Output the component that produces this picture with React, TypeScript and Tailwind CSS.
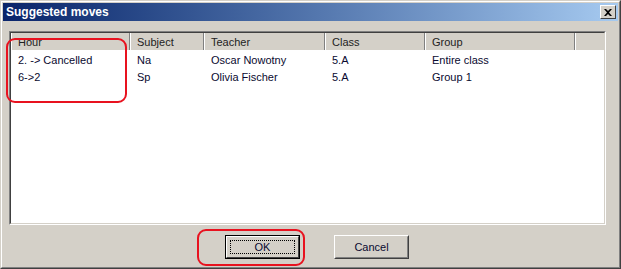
import React from "react";

const cols = [
  { label: "Hour", w: "w-[119px]" },
  { label: "Subject", w: "w-[74px]" },
  { label: "Teacher", w: "w-[121px]" },
  { label: "Class", w: "w-[100px]" },
  { label: "Group", w: "w-[150px]" },
];

const rows = [
  ["2. -> Cancelled", "Na", "Oscar Nowotny", "5.A", "Entire class"],
  ["6->2", "Sp", "Olivia Fischer", "5.A", "Group 1"],
];

export default function App() {
  return (
    <div className="w-[621px] h-[269px] bg-[#d4d0c8] text-[11px] text-black font-['Liberation_Sans',Arial,sans-serif]">
      {/* window frame */}
      <div className="relative w-full h-full border border-t-[#d4d0c8] border-l-[#d4d0c8] border-r-[#404040] border-b-[#404040]">
        <div className="w-full h-full border border-t-white border-l-white border-r-[#808080] border-b-[#808080] p-px flex flex-col">
          {/* title bar */}
          <div className="h-[18px] flex items-center justify-between pl-[3px] pr-[2px] bg-gradient-to-r from-[#0a246a] to-[#a6caf0]">
            <span className="text-white font-bold text-[12px]">Suggested moves</span>
            <div className="w-[16px] h-[14px] bg-[#d4d0c8] border border-t-white border-l-white border-r-[#404040] border-b-[#404040] flex items-center justify-center">
              <svg width="8" height="7" viewBox="0 0 8 7">
                <path d="M0 0h2l2 2 2-2h2L5 3.5 8 7H6L4 5 2 7H0l3-3.5z" fill="#000" />
              </svg>
            </div>
          </div>

          {/* list view */}
          <div className="mt-[10px] ml-[6px] mr-[12px] h-[194px] border border-t-[#808080] border-l-[#808080] border-r-white border-b-white">
            <div className="w-full h-full border border-t-[#404040] border-l-[#404040] border-r-[#d4d0c8] border-b-[#d4d0c8] bg-white flex flex-col">
              <div className="flex h-[17px] bg-[#d4d0c8]">
                {cols.map((c) => (
                  <div
                    key={c.label}
                    className={`${c.w} shrink-0 h-full pl-[6px] pt-px flex items-center border-l border-l-white border-r border-r-[#808080] text-[#222]`}
                  >
                    {c.label}
                  </div>
                ))}
                <div className="flex-1 h-full border-l border-l-white" />
              </div>
              <div className="pt-[2px]">
                {rows.map((r, i) => (
                  <div key={i} className="flex h-[17px] items-center">
                    {r.map((cell, j) => (
                      <div key={j} className={`${cols[j].w} shrink-0 pl-[7px] text-[#0a0a30]`}>
                        {cell}
                      </div>
                    ))}
                  </div>
                ))}
              </div>
            </div>
          </div>

          {/* buttons */}
          <div className="flex justify-center gap-[34px] pl-[13px] mt-[10px]">
            <div className="relative w-[75px] h-[24px] border border-black">
              <div className="w-full h-full border border-t-white border-l-white border-r-[#404040] border-b-[#404040] flex items-center justify-center">
                <div className="absolute inset-[4px] border border-dotted border-black" />
                <span className="text-[#0a0a30]">OK</span>
              </div>
            </div>
            <div className="w-[75px] h-[24px] border border-t-white border-l-white border-r-[#404040] border-b-[#404040]">
              <div className="w-full h-full border border-t-[#d4d0c8] border-l-[#d4d0c8] border-r-[#808080] border-b-[#808080] flex items-center justify-center text-[#0a0a30]">
                Cancel
              </div>
            </div>
          </div>
        </div>

        {/* red annotations */}
        <div className="absolute left-[5px] top-[37px] w-[121px] h-[65px] border-2 border-[#e8121f] rounded-[9px]" />
        <div className="absolute left-[196px] top-[228px] w-[108px] h-[37px] border-2 border-[#e8121f] rounded-[9px]" />
      </div>
    </div>
  );
}
